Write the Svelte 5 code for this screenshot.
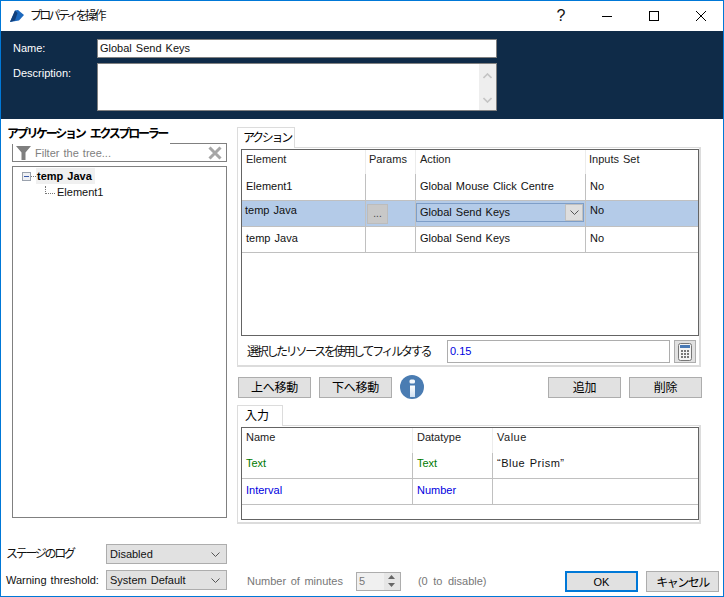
<script>
  const actions = [
    { el: 'Element1', action: 'Global Mouse Click Centre', inputs: 'No' },
    { el: 'temp Java', action: 'Global Send Keys', inputs: 'No', selected: true },
    { el: 'temp Java', action: 'Global Send Keys', inputs: 'No' }
  ];
  const inputs = [
    { name: 'Text', type: 'Text', value: '“Blue Prism”', cls: 'green' },
    { name: 'Interval', type: 'Number', value: '', cls: 'blue' }
  ];
</script>

{#snippet chevron()}
  <svg class="chev" width="9" height="5" viewBox="0 0 9 5"><path d="M.5.5l4 4 4-4" fill="none" stroke="#555" /></svg>
{/snippet}

<div class="window">
  <header class="titlebar">
    <svg class="logo" width="15" height="14" viewBox="0 0 15 14">
      <path d="M5 1.500L8 1l6 5-5 5.500L0 13z" fill="#1c68bd" />
      <path d="M5 1.500L0 13l5-1.500 2.500-7.500z" fill="#123f7a" />
    </svg>
    <span class="title jp">プロパティを操作</span>
    <div class="caption">
      <span class="help">?</span>
      <svg width="12" height="12" viewBox="0 0 12 12"><path d="M1 6.500h10" stroke="#000" /></svg>
      <svg width="12" height="12" viewBox="0 0 12 12"><rect x="1.500" y="1.500" width="9" height="9" fill="none" stroke="#000" /></svg>
      <svg width="12" height="12" viewBox="0 0 12 12"><path d="M1 1l10 10M11 1L1 11" stroke="#000" fill="none" /></svg>
    </div>
  </header>

  <section class="banner">
    <div class="lbl">Name:</div>
    <div class="name-input">Global Send Keys</div>
    <div class="lbl lbl-desc">Description:</div>
    <div class="desc-input">
      <div class="vscroll">
        <svg width="9" height="6" viewBox="0 0 9 6"><path d="M.5 5l4-4 4 4" fill="none" stroke="#c4c4c4" stroke-width="1.6" /></svg>
        <svg width="9" height="6" viewBox="0 0 9 6"><path d="M.5 1l4 4 4-4" fill="none" stroke="#c4c4c4" stroke-width="1.6" /></svg>
      </div>
    </div>
  </section>

  <main class="main">
    <aside class="left">
      <div class="explorer-title jp">アプリケーション エクスプローラー</div>
      <div class="filter">
        <svg width="16" height="14" viewBox="0 0 16 14"><path d="M0 0h15L9.500 6.500V14h-4V6.500z" fill="#7f7f7f" /></svg>
        <span class="filter-text">Filter the tree...</span>
        <svg width="14" height="14" viewBox="0 0 14 14"><path d="M1.500 1.500l11 11M12.500 1.500l-11 11" stroke="#a6a6a6" stroke-width="3" /></svg>
      </div>
      <div class="tree">
        <div class="tree-root">
          <span class="expander"><i></i></span>
          <span class="dots-h"></span>
          <span class="root-name">temp Java</span>
        </div>
        <div class="tree-child">
          <span class="elbow"></span>
          <span>Element1</span>
        </div>
      </div>
    </aside>

    <div class="right">
      <div class="tab jp">アクション</div>
      <div class="panel panel-a">
        <div class="grid grid-a">
          <div class="row row-a head">
            <div>Element</div><div>Params</div><div>Action</div><div>Inputs Set</div>
          </div>
          {#each actions as a, i}
            <div class="row row-a body" class:selected={a.selected} class:first={i === 0}>
              <div>{a.el}</div>
              <div class="params">{#if a.selected}<span class="dots">...</span>{/if}</div>
              <div class="action">
                {#if a.selected}
                  <span class="combo">{a.action}<span class="combo-btn">{@render chevron()}</span></span>
                {:else}
                  {a.action}
                {/if}
              </div>
              <div>{a.inputs}</div>
            </div>
          {/each}
        </div>
        <div class="filter-row">
          <span class="jp filter-label">選択したリソースを使用してフィルタする</span>
          <div class="num-input">0.15</div>
          <div class="calc">
            <svg width="14" height="18" viewBox="0 0 14 18">
              <rect x=".5" y=".5" width="13" height="17" rx="2" fill="#f4f4f4" stroke="#777" />
              <rect x="2" y="2" width="10" height="3" fill="#4a7ab5" />
              <path d="M3 7h2v2H3zM6 7h2v2H6zM9 7h2v2H9zM3 10h2v2H3zM6 10h2v2H6zM9 10h2v2H9zM3 13h2v2H3zM6 13h2v2H6zM9 13h2v2H9z" fill="#777" />
            </svg>
          </div>
        </div>
      </div>

      <div class="buttons">
        <button class="btn jp">上へ移動</button>
        <button class="btn jp">下へ移動</button>
        <svg class="info" width="24" height="24" viewBox="0 0 24 24">
          <defs>
            <linearGradient id="stem" x1="0" y1="0" x2="0" y2="1">
              <stop offset="0" stop-color="#fff" />
              <stop offset="1" stop-color="#cfdff0" />
            </linearGradient>
          </defs>
          <circle cx="12" cy="12" r="12" fill="#4a7cb2" />
          <rect x="9.500" y="4.500" width="5.500" height="4" rx="1.500" fill="#f4f8fc" />
          <path d="M10 10.500h5V22h-5z" fill="url(#stem)" />
        </svg>
        <span class="spacer"></span>
        <button class="btn jp">追加</button>
        <button class="btn jp">削除</button>
      </div>

      <div class="tab tab-b jp">入力</div>
      <div class="panel panel-b">
        <div class="grid grid-b">
          <div class="row row-b head">
            <div>Name</div><div>Datatype</div><div>Value</div>
          </div>
          {#each inputs as r}
            <div class="row row-b body">
              <div class={r.cls}>{r.name}</div>
              <div class={r.cls}>{r.type}</div>
              <div>{r.value}</div>
            </div>
          {/each}
        </div>
      </div>
    </div>
  </main>

  <footer class="footer">
    <div class="foot-left">
      <div class="foot-line">
        <span class="foot-label jp">ステージのログ</span>
        <div class="select">Disabled{@render chevron()}</div>
      </div>
      <div class="foot-line">
        <span class="foot-label">Warning threshold:</span>
        <div class="select">System Default{@render chevron()}</div>
      </div>
    </div>
    <div class="foot-mid">
      <span class="muted">Number of minutes</span>
      <div class="spin">
        <span>5</span>
        <div class="spin-btns">
          <svg width="7" height="4" viewBox="0 0 7 4"><path d="M3.500 0L7 4H0z" fill="#666" /></svg>
          <svg width="7" height="4" viewBox="0 0 7 4"><path d="M3.500 4L7 0H0z" fill="#666" /></svg>
        </div>
      </div>
      <span class="muted hint">(0 to disable)</span>
    </div>
    <div class="foot-right">
      <button class="btn ok">OK</button>
      <button class="btn jp cancel">キャンセル</button>
    </div>
  </footer>
</div>

<style>
  :global(body) { margin: 0; background: #fff; }
  * { box-sizing: border-box; }
  .window {
    width: 724px; height: 597px; background: #fff;
    border: 1px solid #0078d7; display: flex; flex-direction: column; overflow: hidden;
    font: 11px "Liberation Sans", "Noto Sans CJK JP", sans-serif; word-spacing: 1px; color: #111; white-space: nowrap;
  }
  .jp { font-family: "Noto Sans CJK JP", sans-serif; letter-spacing: -2.300px; font-size: 12px; word-spacing: 5px; }

  .titlebar { height: 30px; display: flex; align-items: center; padding-left: 9px; flex: none; }
  .title { margin-left: 5px; letter-spacing: -2.700px; padding-bottom: 3px; }
  .caption { margin-left: auto; display: flex; align-items: center; }
  .help { font-size: 16px; width: 16px; margin-right: 32px; text-align: center; }
  .caption svg { margin-right: 35px; }
  .caption svg:last-child { margin-right: 16px; }

  .banner {
    height: 88px; flex: none; background: #0f2b48; padding: 8px 0 0 12px;
    display: grid; grid-template-columns: 84px 400px; grid-template-rows: 19px 48px; row-gap: 5px;
  }
  .lbl { color: #fff; line-height: 19px; }
  .lbl-desc { padding-top: 1px; }
  .name-input { background: #fff; border: 1px solid #808080; padding-left: 2px; line-height: 16px; }
  .desc-input { background: #fff; border: 1px solid #808080; display: flex; justify-content: flex-end; }
  .vscroll { width: 17px; background: #eee; display: flex; flex-direction: column; justify-content: space-between; align-items: center; padding: 9px 0 7px; }

  .main { flex: 1; display: flex; min-height: 0; }
  .left { width: 236px; flex: none; padding: 7px 0 0 11px; }
  .explorer-title { position: relative; z-index: 1; margin: 0 0 -1px -5px; width: 163px; height: 18px; line-height: 14px; background: #fff; font-weight: 700; color: #000; }
  .filter { height: 19px; margin-top: -1px; width: 215px; border: 1px solid #808080; display: flex; align-items: center; padding: 0 4px 0 3px; gap: 3px; }
  .filter-text { color: #808080; flex: 1; }
  .tree { margin-top: 4px; width: 215px; height: 352px; border: 1px solid #808080; padding: 1px 0 0 9px; }
  .tree-root { display: flex; align-items: center; height: 16px; }
  .expander { width: 9px; height: 9px; border: 1px solid #9aa2ad; background: #eef0f4; display: flex; align-items: center; justify-content: center; }
  .expander i { width: 5px; height: 1px; background: #3a5aa8; }
  .dots-h { width: 5px; border-top: 1px dotted #777; }
  .root-name { font-weight: 700; background: #f0f0f0; padding: 0 3px 0 1px; line-height: 16px; color: #000; }
  .tree-child { display: flex; align-items: flex-end; padding-left: 23px; height: 15px; line-height: 14px; }
  .elbow { width: 10px; height: 8px; margin: 0 2px 5px 0; border-left: 1px dotted #777; border-bottom: 1px dotted #777; }

  .right { flex: 1; padding: 8px 0 0 0; min-width: 0; }
  .tab { width: 58px; height: 21px; border: 1px solid #dcdcdc; border-bottom: 0; line-height: 17px; padding-left: 5px; color: #000; background: #fff; position: relative; z-index: 1; margin-bottom: -1px; }
  .tab-b { width: 46px; letter-spacing: 0; margin-top: 6px; padding-left: 7px; }
  .panel { width: 464px; border: 1px solid #dcdcdc; border-width: 1px 2px 2px 1px; padding: 1px 0 0 3px; }
  .panel-a { height: 220px; }
  .panel-b { height: 99px; }
  .grid { width: 458px; border: 1px solid #646464; background: #fff; }
  .grid-a { height: 187px; }
  .grid-b { height: 93px; }
  .row { display: grid; }
  .row-a { grid-template-columns: 124px 50px 170px 1fr; }
  .row-b { grid-template-columns: 171px 80px 1fr; }
  .row > div { border-right: 1px solid #c0c0c0; padding-left: 4px; display: flex; align-items: center; }
  .row > div:last-child { border-right: 0; }
  .head { height: 24px; }
  .head > div { border-right-color: #ececec; align-items: flex-start; padding-top: 3px; padding-left: 4px; color: #222; }
  .row-a.head > div:nth-child(2), .row-a.head > div:nth-child(4) { padding-left: 3px; }
  .body { height: 26px; border-bottom: 1px solid #c0c0c0; }
  .body > div { padding-bottom: 2px; }
  .row-a.body:last-child > div { padding-bottom: 4px; }
  .body.first { height: 27px; }
  .row-b.head { height: 25px; }
  .row-b.body { height: 26px; }
  .row-b.body > div { padding-bottom: 4px; }
  .row-b.body:nth-child(2) > div { padding-bottom: 5px; }
  .row-b > div:last-child { letter-spacing: .5px; }
  .selected { background: #b4cbe8; }
  .selected > div:first-child, .selected > div:last-child { align-items: flex-start; padding-top: 3px; }
  .selected > div:first-child { padding-left: 3px; }
  .params { padding: 0 !important; }
  .dots { width: 21px; height: 20px; margin-left: 1px; background: #c8c8c8; border: 1px solid #bcbcbc; font-size: 10px; color: #444; display: flex; align-items: center; justify-content: center; }
  .action { padding-left: 4px; }
  .selected .action { padding: 0 0 3px 0; }
  .combo { width: 168px; height: 19px; border: 1px solid #7e9ec8; display: flex; align-items: center; padding-left: 3px; justify-content: space-between; }
  .combo-btn { width: 18px; height: 17px; background: #dedede; border: 1px solid #c0c0c0; display: flex; align-items: center; justify-content: center; }
  .green { color: #007a00; }
  .blue { color: #0000e0; }

  .filter-row { display: flex; align-items: center; margin-top: 4px; padding-left: 6px; height: 23px; }
  .filter-label { width: 200px; flex: none; padding-bottom: 2px; }
  .num-input { width: 223px; height: 23px; border: 1px solid #adadad; color: #0000e0; line-height: 21px; padding-left: 2px; }
  .calc { width: 22px; height: 23px; margin-left: 4px; background: #e1e1e1; border: 1px solid #adadad; display: flex; align-items: center; justify-content: center; }

  .buttons { display: flex; align-items: center; height: 24px; margin: 8px 0 0 1px; width: 464px; gap: 8px; }
  .btn { width: 73px; height: 21px; padding: 0; background: #e1e1e1; border: 1px solid #adadad; font: inherit; color: #000; }
  .btn.jp { letter-spacing: -.3px; font-family: "Noto Sans CJK JP", sans-serif; font-size: 12px; padding-bottom: 3px; }
  .btn.cancel { letter-spacing: -1.500px; padding-bottom: 1px; }
  .spacer { flex: 1; }

  .footer { flex: none; height: 56px; display: flex; padding: 4px 0 0 5px; }
  .foot-left { width: 221px; flex: none; display: flex; flex-direction: column; gap: 6px; }
  .foot-line { display: flex; align-items: center; justify-content: space-between; height: 20px; }
  .foot-label { color: #111; padding-bottom: 1px; }
  .foot-label.jp { padding-bottom: 3px; }
  .select { width: 121px; height: 20px; background: #e1e1e1; border: 1px solid #adadad; display: flex; align-items: center; justify-content: space-between; padding: 0 6px 0 3px; }
  .foot-mid { display: flex; align-items: center; align-self: flex-end; height: 20px; margin: 0 0 5px 20px; }
  .muted { color: #777; word-spacing: 1.500px; }
  .spin { width: 45px; height: 19px; margin-left: 13px; background: #f0f0f0; border: 1px solid #adadad; display: flex; justify-content: space-between; padding-left: 2px; line-height: 17px; color: #777; }
  .spin-btns { width: 16px; display: flex; flex-direction: column; align-items: center; justify-content: space-around; background: #e6e6e6; }
  .hint { margin-left: 17px; word-spacing: 2.500px; }
  .foot-right { margin-left: auto; align-self: flex-end; display: flex; gap: 8px; margin-bottom: 4px; padding-right: 4px; }
  .ok { border: 2px solid #0078d7; }
  .chev { flex: none; }
</style>
